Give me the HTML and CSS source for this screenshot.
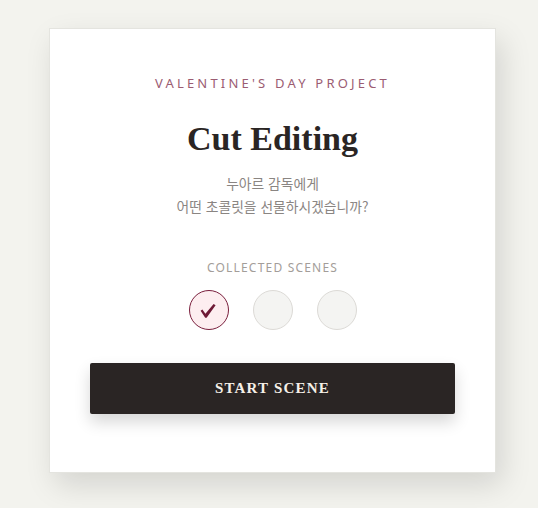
FILE: index.html
```html
<!DOCTYPE html>
<html lang="ko">
<head>
<meta charset="utf-8">
<link rel="stylesheet" href="styles.css">
</head>
<body>
<main class="card">
  <p class="eyebrow">VALENTINE'S DAY PROJECT</p>
  <h1 class="title">Cut Editing</h1>
  <p class="desc">누아르 감독에게<br>어떤 초콜릿을 선물하시겠습니까?</p>
  <p class="label">COLLECTED SCENES</p>
  <div class="scenes">
    <span class="scene done"><svg class="check" width="16" height="14" viewBox="0 0 16 14"><polygon points="0.6,6.8 2.4,5.6 5.4,9.8 13.6,0 15.6,1.2 6.6,13.8 5.2,13.8" fill="currentColor"/></svg></span>
    <span class="scene"></span>
    <span class="scene"></span>
  </div>
  <button class="start">START SCENE</button>
</main>
</body>
</html>
```
FILE: styles.css
```css
html, body { margin: 0; padding: 0; }
body {
  background: #f3f3ee;
  width: 538px;
  height: 508px;
  padding: 28px 0 0 49px;
  box-sizing: border-box;
  font-family: "Noto Sans", "Noto Sans CJK KR", sans-serif;
}
.card {
  width: 447px;
  box-sizing: border-box;
  background: #fff;
  border: 1px solid #e4e4df;
  padding: 45px 40px 58px;
  text-align: center;
  box-shadow: 6px 12px 28px rgba(0,0,0,0.13);
}
.eyebrow {
  margin: 0;
  font-size: 13px;
  line-height: 18px;
  letter-spacing: 3.2px;
  color: #9b5c72;
}
.title {
  margin: 27px 0 0;
  font-family: "Liberation Serif", serif;
  font-weight: 700;
  font-size: 34px;
  line-height: 40px;
  color: #2a2524;
}
.desc {
  margin: 13px 0 0;
  font-family: "Noto Sans CJK KR", sans-serif;
  font-size: 13.8px;
  line-height: 23px;
  color: #8a8582;
}
.label {
  margin: 42px 0 0;
  font-size: 12px;
  line-height: 16px;
  letter-spacing: 1.2px;
  color: #a39d99;
}
.scenes {
  margin-top: 14px;
  display: flex;
  justify-content: center;
  gap: 24px;
}
.scene {
  width: 40px;
  height: 40px;
  box-sizing: border-box;
  border-radius: 50%;
  border: 1px solid #dcdad6;
  background: #f4f4f2;
  display: flex;
  align-items: center;
  justify-content: center;
}
.scene.done {
  background: #fdeef0;
  border-color: #7a1f3d;
  color: #6e1a36;
}
.check {
  display: block;
  margin: 2px 1px 0 0;
}
.start {
  display: block;
  margin-top: 33px;
  width: 100%;
  height: 51px;
  border: 0;
  border-radius: 2px;
  background: #2a2524;
  color: #f5f0e8;
  font-family: "Liberation Serif", serif;
  font-weight: 700;
  font-size: 15px;
  letter-spacing: 1.2px;
  box-shadow: 0 8px 16px rgba(0,0,0,0.16);
}
```
